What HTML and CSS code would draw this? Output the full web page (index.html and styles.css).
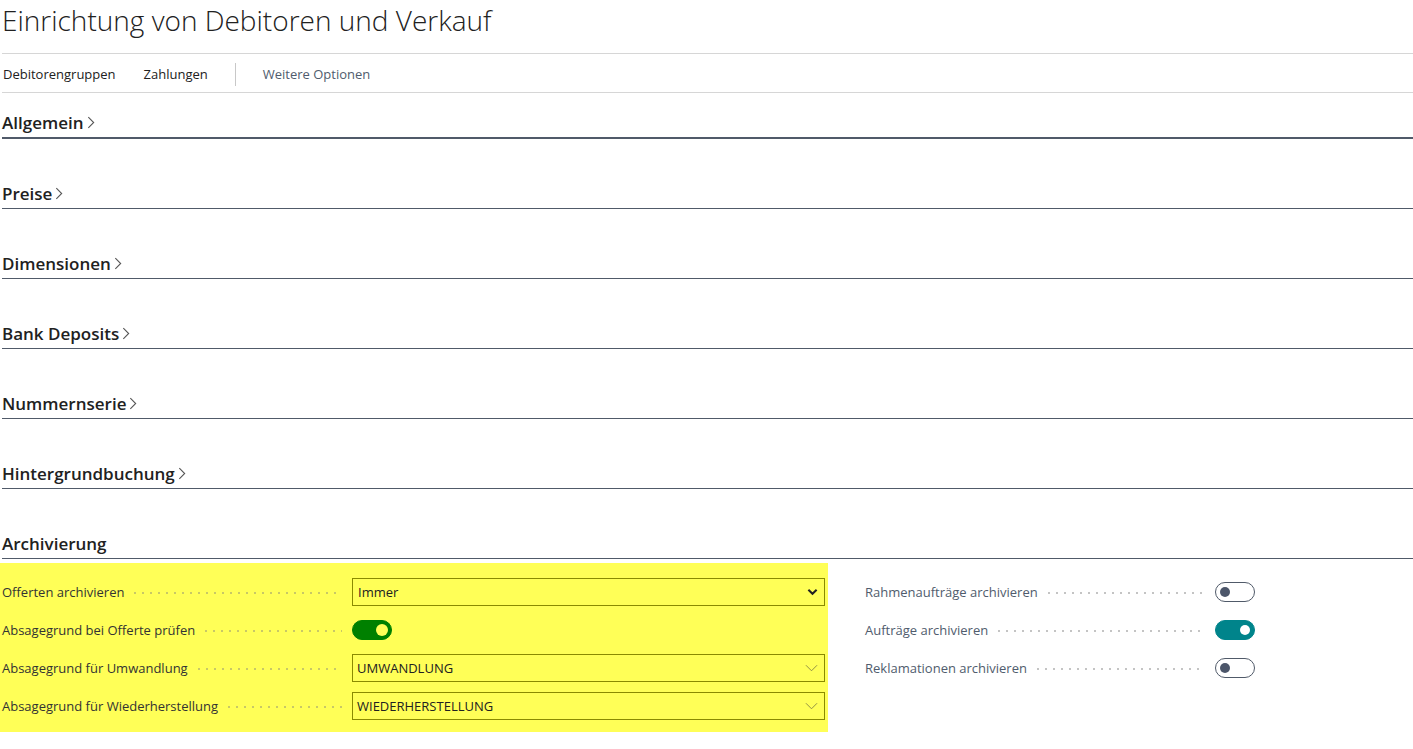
FILE: index.html
```html
<!DOCTYPE html>
<html lang="de">
<head>
  <meta charset="UTF-8">
  <title>Einrichtung von Debitoren und Verkauf</title>
  <meta name="viewport" content="width=device-width, initial-scale=1.0">
  <link rel="stylesheet" href="styles.css">
</head>
<body>

<div class="page">
  <h1 class="page-title">Einrichtung von Debitoren und Verkauf</h1>

  <div class="action-bar">
    <a class="action">Debitorengruppen</a>
    <a class="action">Zahlungen</a>
    <span class="action-sep"></span>
    <a class="action more">Weitere Optionen</a>
  </div>

  <div class="fasttab first">
    <h2 class="tab-head">Allgemein <svg class="chev" viewBox="0 0 7 14"><polyline points="1,2 6,7 1,12"/></svg></h2>
  </div>
  <div class="fasttab">
    <h2 class="tab-head">Preise <svg class="chev" viewBox="0 0 7 14"><polyline points="1,2 6,7 1,12"/></svg></h2>
  </div>
  <div class="fasttab">
    <h2 class="tab-head">Dimensionen <svg class="chev" viewBox="0 0 7 14"><polyline points="1,2 6,7 1,12"/></svg></h2>
  </div>
  <div class="fasttab">
    <h2 class="tab-head">Bank Deposits <svg class="chev" viewBox="0 0 7 14"><polyline points="1,2 6,7 1,12"/></svg></h2>
  </div>
  <div class="fasttab">
    <h2 class="tab-head">Nummernserie <svg class="chev" viewBox="0 0 7 14"><polyline points="1,2 6,7 1,12"/></svg></h2>
  </div>
  <div class="fasttab">
    <h2 class="tab-head">Hintergrundbuchung <svg class="chev" viewBox="0 0 7 14"><polyline points="1,2 6,7 1,12"/></svg></h2>
  </div>
  <div class="fasttab open">
    <h2 class="tab-head">Archivierung</h2>
  </div>

  <div class="tab-body">
    <div class="group highlight">
      <div class="field">
        <span class="label">Offerten archivieren</span>
        <span class="dots"></span>
        <div class="input select">
          <span>Immer</span>
          <svg class="drop bold" viewBox="0 0 12 8"><polyline points="1.5,1.5 6,6 10.5,1.5"/></svg>
        </div>
      </div>
      <div class="field">
        <span class="label">Absagegrund bei Offerte prüfen</span>
        <span class="dots"></span>
        <div class="input-slot">
          <span class="toggle on green"></span>
        </div>
      </div>
      <div class="field">
        <span class="label">Absagegrund für Umwandlung</span>
        <span class="dots"></span>
        <div class="input lookup">
          <span>UMWANDLUNG</span>
          <svg class="drop" viewBox="0 0 14 8"><polyline points="1,1 7,7 13,1"/></svg>
        </div>
      </div>
      <div class="field">
        <span class="label">Absagegrund für Wiederherstellung</span>
        <span class="dots"></span>
        <div class="input lookup">
          <span>WIEDERHERSTELLUNG</span>
          <svg class="drop" viewBox="0 0 14 8"><polyline points="1,1 7,7 13,1"/></svg>
        </div>
      </div>
    </div>

    <div class="group right">
      <div class="field">
        <span class="label">Rahmenaufträge archivieren</span>
        <span class="dots"></span>
        <span class="toggle"></span>
      </div>
      <div class="field">
        <span class="label">Aufträge archivieren</span>
        <span class="dots"></span>
        <span class="toggle on"></span>
      </div>
      <div class="field">
        <span class="label">Reklamationen archivieren</span>
        <span class="dots"></span>
        <span class="toggle"></span>
      </div>
    </div>
  </div>
</div>

</body>
</html>
```

FILE: styles.css
```css
body {
  margin: 0;
  background: #fff;
  font-family: 'Open Sans', 'Noto Sans', sans-serif;
  color: #212121;
}

.page {
  padding: 0 0 0 2px;
}

.page-title {
  margin: 0;
  height: 54px;
  box-sizing: border-box;
  padding-top: 1px;
  font-size: 28px;
  font-weight: 300;
  line-height: 38px;
  border-bottom: 1px solid #d6d6d6;
}

.action-bar {
  display: flex;
  align-items: center;
  height: 39px;
  box-sizing: border-box;
  padding-top: 2px;
  border-bottom: 1px solid #d6d6d6;
  font-size: 13px;
}

.action {
  margin-right: 27px;
  padding-left: 1px;
}

.action-sep {
  width: 1px;
  height: 23px;
  background: #c8c8c8;
  margin-right: 26px;
}

.action.more {
  color: #505c6d;
}

/* collapsible section headers */
.fasttab {
  height: 70px;
  box-sizing: border-box;
  display: flex;
  align-items: flex-end;
  border-bottom: 1px solid #505a69;
}

.fasttab.first {
  height: 46px;
  border-bottom-width: 2px;
}

.tab-head {
  margin: 0 0 3px;
  font-size: 17px;
  font-weight: 600;
  display: flex;
  align-items: center;
  gap: 3px;
}

.chev {
  width: 8px;
  height: 15px;
  fill: none;
  stroke: #555;
  stroke-width: 1;
}

.tab-body {
  display: flex;
  align-items: flex-start;
  padding-top: 4px;
}

.group {
  display: flex;
  flex-direction: column;
}

.highlight {
  width: 828px;
  margin-left: -2px;
  padding: 10px 0 7px 2px;
  box-sizing: border-box;
  background: #ffff57;
}

.right {
  width: 392px;
  margin-left: 37px;
  padding-top: 10px;
}

.field {
  display: flex;
  align-items: center;
  height: 38px;
  font-size: 13px;
}

.label {
  white-space: nowrap;
  color: #333;
  padding-right: 10px;
}

.right .label {
  color: #505c6d;
}

.dots {
  flex: 1;
  height: 2px;
  margin-top: 2px;
  background-image: linear-gradient(to right, #c4c4c4 2px, transparent 2px);
  background-size: 8px 2px;
  background-repeat: repeat-x;
  margin-right: 10px;
}

.highlight .dots {
  background-image: linear-gradient(to right, #c8c866 2px, transparent 2px);
}

.input,
.input-slot {
  width: 473px;
  height: 28px;
  box-sizing: border-box;
  margin-right: 3px;
  display: flex;
  align-items: center;
}

.input {
  border: 1px solid #8a8a00;
  padding: 0 6px 0 4px;
  justify-content: space-between;
}

.select span {
  padding-left: 1px;
}

.drop {
  width: 13px;
  height: 8px;
  fill: none;
  stroke: #888844;
  stroke-width: 1;
}

.drop.bold {
  width: 11px;
  stroke: #222;
  stroke-width: 2.2;
}

.toggle {
  position: relative;
  width: 40px;
  height: 20px;
  box-sizing: border-box;
  border: 1px solid #505a69;
  border-radius: 10px;
  margin-right: 2px;
}

.toggle::after {
  content: "";
  position: absolute;
  left: 4px;
  top: 4px;
  width: 10px;
  height: 10px;
  border-radius: 50%;
  background: #4c566a;
}

.toggle.on {
  background: #00848b;
  border-color: #00848b;
}

.toggle.on::after {
  left: auto;
  right: 4px;
  background: #fff;
}

.toggle.green {
  background: #008000;
  border-color: #008000;
}

.toggle.green::after {
  background: #ffff57;
  width: 12px;
  height: 12px;
  top: 3px;
  right: 3px;
}
```
